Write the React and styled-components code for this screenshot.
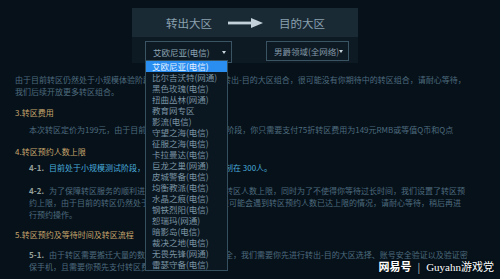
import React from "react";
import styled, { createGlobalStyle } from "styled-components";

const GlobalStyle = createGlobalStyle`
  body {
    margin: 0;
    background: #06111a;
    font-family: "Noto Sans CJK SC", "Noto Sans", sans-serif;
  }
`;

const Page = styled.div`
  position: relative;
  width: 500px;
  height: 279px;
  padding-top: 8px;
  box-sizing: border-box;
  overflow: hidden;
  background: #06111a;
`;

const Panel = styled.div`
  width: 226px;
  margin-left: 132px;
`;

const PanelHead = styled.div`
  height: 29px;
  display: flex;
  align-items: center;
  padding-left: 34px;
  gap: 16px;
  background: #1a2a35;
  color: #8aa1af;
  font-size: 11.5px;
`;

const PanelBody = styled.div`
  height: 26px;
  display: flex;
  align-items: flex-start;
  justify-content: space-between;
  padding: 4px 9px 0 13px;
  box-sizing: border-box;
  background: #0e1a23;
`;

const SelectWrap = styled.div`
  position: relative;
`;

const Select = styled.div`
  width: ${(p) => p.$w}px;
  height: ${(p) => p.$h}px;
  box-sizing: border-box;
  border: 1px solid #3a5464;
  display: flex;
  align-items: center;
  justify-content: space-between;
  padding: 0 5px 0 7px;
  color: ${(p) => p.$color || "#8ea6b6"};
  font-size: 8.5px;
  white-space: nowrap;
`;

const Caret = styled.span`
  width: 0;
  height: 0;
  border-left: 2px solid transparent;
  border-right: 2px solid transparent;
  border-top: 3px solid #c9d5dc;
`;

const DropList = styled.ul`
  position: absolute;
  top: 19px;
  left: 0;
  width: 83px;
  margin: 0;
  padding: 0;
  list-style: none;
  border: 1px solid #34505f;
  box-sizing: border-box;
  background: #0a1720;
  z-index: 2;
`;

const DropItem = styled.li`
  height: 11px;
  line-height: 11px;
  padding-left: 6px;
  font-size: 8.5px;
  white-space: nowrap;
  color: ${(p) => (p.$active ? "#e6f2ff" : "#7b93a3")};
  background: ${(p) => (p.$active ? "#2a8df0" : "transparent")};
`;

const Content = styled.div`
  padding-left: 15px;
  font-size: 8px;
  line-height: 12px;
  color: #4e6b7d;
`;

const Line = styled.div`
  white-space: nowrap;
`;

const Para = styled.div`
  margin-top: ${(p) => p.$mt}px;
  padding-left: ${(p) => p.$indent || 0}px;
`;

const Heading = styled.div`
  margin-top: ${(p) => p.$mt}px;
  color: #c6a66c;
  white-space: nowrap;
`;

const Label = styled.span`
  display: inline-block;
  width: 20px;
  color: #96a09a;
  font-weight: bold;
`;

const Blue = styled.span`
  color: #49addb;
`;

const Mark = styled.div`
  position: absolute;
  right: 6px;
  bottom: 5px;
  display: flex;
  align-items: center;
  gap: 6px;
  color: #ffffff;
  font-size: 11px;
  text-shadow: 0 0 2px rgba(0, 0, 0, 0.6);
`;

const MarkBrand = styled.span`
  font-weight: bold;
`;

const MarkSep = styled.span`
  color: #c8c8c8;
  font-size: 10px;
`;

const MarkName = styled.span`
  font-family: "Liberation Serif", "Noto Sans CJK SC", serif;
`;

const servers = [
  "艾欧尼亚(电信)",
  "比尔吉沃特(网通)",
  "黑色玫瑰(电信)",
  "扭曲丛林(网通)",
  "教育网专区",
  "影流(电信)",
  "守望之海(电信)",
  "征服之海(电信)",
  "卡拉曼达(电信)",
  "巨龙之巢(网通)",
  "皮城警备(电信)",
  "均衡教派(电信)",
  "水晶之痕(电信)",
  "钢铁烈阳(电信)",
  "恕瑞玛(网通)",
  "暗影岛(电信)",
  "裁决之地(电信)",
  "无畏先锋(网通)",
  "雷瑟守备(电信)",
];

const Arrow = () => (
  <svg width="35" height="12" viewBox="0 0 35 12">
    <rect x="0" y="4.6" width="24" height="2.8" fill="#c3d1da" />
    <polygon points="23,1 35,6 23,11" fill="#c3d1da" />
  </svg>
);

export default function App() {
  return (
    <Page>
      <GlobalStyle />
      <Panel>
        <PanelHead>
          <span>转出大区</span>
          <Arrow />
          <span>目的大区</span>
        </PanelHead>
        <PanelBody>
          <SelectWrap>
            <Select $w={87} $h={22}>
              艾欧尼亚(电信)
              <Caret />
            </Select>
            <DropList>
              {servers.map((s, i) => (
                <DropItem key={s} $active={i === 0}>
                  {s}
                </DropItem>
              ))}
            </DropList>
          </SelectWrap>
          <Select $w={83} $h={20} $color="#8398a6">
            男爵领域(全网络)
            <Caret />
          </Select>
        </PanelBody>
      </Panel>

      <Content>
        <Para $mt={11}>
          <Line>
            由于目前转区仍然处于小规模体验阶段，我们只开放了部分转出-目的大区组合，很可能没有你期待中的转区组合，请耐心等待，
          </Line>
          <Line>我们后续开放更多转区组合。</Line>
        </Para>

        <Heading $mt={9}>3.转区费用</Heading>
        <Para $mt={5} $indent={14}>
          <Line>
            本次转区定价为199元，由于目前转区仍处于小规模体验阶段，你只需要支付75折转区费用为149元RMB或等值Q币和Q点
          </Line>
        </Para>

        <Heading $mt={10}>4.转区预约人数上限</Heading>
        <Para $mt={4} $indent={14}>
          <Line>
            <Label>4-1.</Label>
            <Blue>目前处于小规模测试阶段，转区预约人数上限将限制在 300人。</Blue>
          </Line>
        </Para>
        <Para $mt={11} $indent={14}>
          <Line>
            <Label>4-2.</Label>
            为了保障转区服务的顺利进行，我们设置了每日的转区人数上限，同时为了不使得你等待过长时间，我们设置了转区预
          </Line>
          <Line>
            约上限，由于目前的转区仍然处于小规模体验阶段，你很可能会遇到转区预约人数已达上限的情况，请耐心等待，稍后再进
          </Line>
          <Line>行预约操作。</Line>
        </Para>

        <Heading $mt={8}>5.转区预约及等待时间及转区流程</Heading>
        <Para $mt={8} $indent={14}>
          <Line>
            <Label>5-1.</Label>
            由于转区需要搬迁大量的数据，为了保证数据的安全，我们需要你先进行转出-目的大区选择、账号安全验证以及验证密
          </Line>
          <Line>保手机，且需要你预先支付转区费用。</Line>
        </Para>
      </Content>

      <Mark>
        <MarkBrand>网易号</MarkBrand>
        <MarkSep>|</MarkSep>
        <MarkName>Guyahn游戏党</MarkName>
      </Mark>
    </Page>
  );
}
